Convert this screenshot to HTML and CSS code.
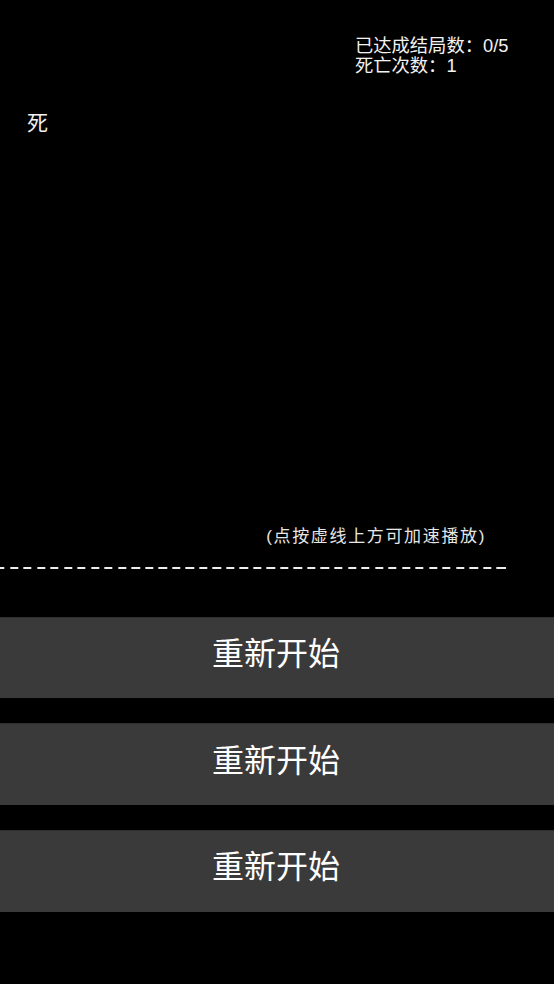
FILE: index.html
```html
<!DOCTYPE html>
<html lang="zh-CN">
<head>
<meta charset="utf-8">
<title>结局</title>
<link rel="stylesheet" href="styles.css">
</head>
<body>
<div class="page">
  <div class="stats">
    <div class="stat-line">已达成结局数：0/5</div>
    <div class="stat-line">死亡次数：1</div>
  </div>
  <div class="story">死</div>
  <div class="hint">(点按虚线上方可加速播放)</div>
  <div class="divider"></div>
  <div class="actions">
    <button class="btn">重新开始</button>
    <button class="btn">重新开始</button>
    <button class="btn">重新开始</button>
  </div>
</div>
</body>
</html>
```

FILE: styles.css
```css
html, body {
  margin: 0;
  padding: 0;
  background: #000;
}
body {
  font-family: "Liberation Sans", "Noto Sans CJK SC", sans-serif;
  color: #fff;
}
.page {
  width: 554px;
  height: 984px;
  overflow: hidden;
  display: flex;
  flex-direction: column;
}
.stats {
  padding-top: 36px;
  padding-left: 355px;
  font-size: 18.3px;
  line-height: 20px;
  color: #f2f2f2;
}
.stat-line {
  white-space: nowrap;
}
.story {
  margin-top: 35px;
  padding-left: 27px;
  font-size: 21px;
  line-height: 24px;
  color: #f2f2f2;
}
.hint {
  margin-top: 392px;
  align-self: flex-end;
  margin-right: 68px;
  font-size: 17px;
  line-height: 20px;
  letter-spacing: 1.65px;
  color: #e6e6e6;
  white-space: nowrap;
}
.divider {
  margin-top: 20px;
  width: 506px;
  height: 2px;
  background: repeating-linear-gradient(to right, #eee 0 8.3px, transparent 8.3px 13.52px);
  background-position: -3.7px 0;
}
.actions {
  margin-top: 47.5px;
  display: flex;
  flex-direction: column;
  gap: 25px;
}
.btn {
  display: flex;
  align-items: center;
  justify-content: center;
  height: 81.7px;
  width: 100%;
  margin: 0;
  padding: 0 2px 14px 0;
  border: none;
  border-top: 1px solid #2f2f2f;
  background: #3a3a3a;
  color: #fff;
  font-family: "Liberation Sans", "Noto Sans CJK SC", sans-serif;
  font-size: 32px;
  cursor: pointer;
}
```
